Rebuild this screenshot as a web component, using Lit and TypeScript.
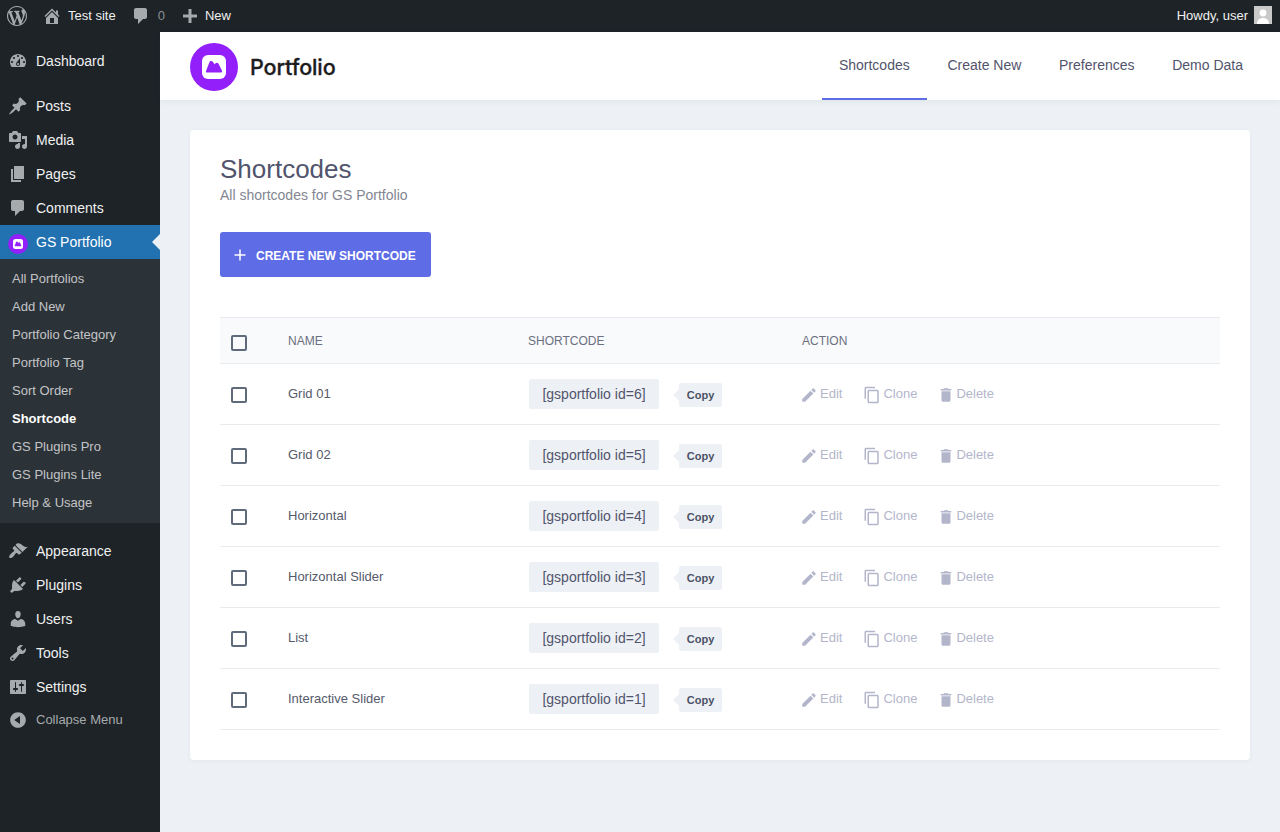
import { LitElement, html, css, svg } from 'lit';
import { customElement } from 'lit/decorators.js';

const ICONS: Record<string, string> = {
    wp: 'M20 10c0-5.51-4.49-10-10-10C4.48 0 0 4.49 0 10c0 5.52 4.48 10 10 10 5.51 0 10-4.48 10-10zM7.78 15.37L4.37 6.22c.55-.02 1.17-.08 1.17-.08.5-.06.44-1.13-.06-1.11 0 0-1.45.11-2.37.11-.18 0-.37 0-.58-.01C4.12 2.69 6.87 1.11 10 1.11c2.33 0 4.45.87 6.05 2.34-.68-.11-1.65.39-1.65 1.58 0 .74.45 1.36.9 2.1.35.61.55 1.36.55 2.46 0 1.49-1.4 5-1.4 5l-3.03-8.37c.54-.02.82-.17.82-.17.5-.05.44-1.25-.06-1.22 0 0-1.44.12-2.38.12-.87 0-2.33-.12-2.33-.12-.5-.03-.56 1.2-.06 1.22l.92.08 1.26 3.41zM17.41 10c.24-.64.74-1.87.43-4.25.7 1.29 1.05 2.71 1.05 4.25 0 3.29-1.73 6.24-4.4 7.78.97-2.59 1.94-5.2 2.92-7.78zM6.1 18.09C3.12 16.65 1.11 13.53 1.11 10c0-1.3.23-2.48.72-3.59C3.25 10.3 4.67 14.2 6.1 18.09zm4.03-6.63l2.58 6.98c-.86.29-1.76.45-2.71.45-.79 0-1.57-.11-2.29-.33.81-2.38 1.62-4.74 2.42-7.1z',
    home: 'M16 8.5l1.53 1.53-1.06 1.06L10 4.62l-6.47 6.47-1.06-1.06L10 2.5l4 4v-2h2v4zm-6-2.46l6 5.99V18H4v-5.97zM12 17v-5H8v5h4z',
    comment: 'M5 2h9c1.1 0 2 .9 2 2v7c0 1.1-.9 2-2 2h-2l-5 5v-5H5c-1.1 0-2-.9-2-2V4c0-1.1.9-2 2-2z',
    plus: 'M17 8.5v3h-5.5V17h-3v-5.5H3v-3h5.5V3h3v5.5z',
    dashboard: 'M3.76 16h12.48c1.1-1.37 1.76-3.11 1.76-5 0-4.42-3.58-8-8-8s-8 3.58-8 8c0 1.89.66 3.63 1.76 5zM10 4c.55 0 1 .45 1 1s-.45 1-1 1-1-.45-1-1 .45-1 1-1zM6 6c.55 0 1 .45 1 1s-.45 1-1 1-1-.45-1-1 .45-1 1-1zm8 0c.55 0 1 .45 1 1s-.45 1-1 1-1-.45-1-1 .45-1 1-1zm-5.37 5.55L12 7v6c0 1.1-.9 2-2 2s-2-.9-2-2c0-.57.24-1.08.63-1.45zM4 10c.55 0 1 .45 1 1s-.45 1-1 1-1-.45-1-1 .45-1 1-1zm12 0c.55 0 1 .45 1 1s-.45 1-1 1-1-.45-1-1 .45-1 1-1zm-5 3c0-.55-.45-1-1-1s-1 .45-1 1 .45 1 1 1 1-.45 1-1z',
    pin: 'M10.44 3.02l1.82-1.82 6.36 6.35-1.83 1.82c-1.05-.68-2.48-.57-3.41.36l-.75.75c-.92.93-1.04 2.35-.35 3.41l-1.83 1.82-2.41-2.41-2.8 2.79c-.42.42-3.38 2.71-3.8 2.29s1.86-3.39 2.28-3.81l2.79-2.79L4.1 9.36l1.83-1.82c1.05.69 2.48.57 3.4-.36l.75-.75c.93-.92 1.05-2.35.36-3.41z',
    media: 'M13 11V4c0-.55-.45-1-1-1h-1.67L9 1H5L3.67 3H2c-.55 0-1 .45-1 1v7c0 .55.45 1 1 1h10c.55 0 1-.45 1-1zM7 4.5c1.38 0 2.5 1.12 2.5 2.5S8.38 9.5 7 9.5 4.5 8.38 4.5 7 5.62 4.5 7 4.5zM14 6h5v10.5c0 1.38-1.12 2.5-2.5 2.5S14 17.88 14 16.5s1.12-2.5 2.5-2.5c.17 0 .34.02.5.05V9h-3V6zm-4 8.05V13h2v3.5c0 1.38-1.12 2.5-2.5 2.5S7 17.88 7 16.5 8.12 14 9.5 14c.17 0 .34.02.5.05z',
    page: 'M6 15V2h10v13H6zm-1 1h8v2H3V5h2v11z',
    appearance: 'M14.48 11.06L7.41 3.99l1.5-1.5c.5-.56 2.3-.47 3.51.32 1.21.8 1.43 1.28 2.91 2.1 1.18.64 2.45 1.26 4.45.85zm-.71.71L6.7 4.7 4.93 6.47c-.39.39-.39 1.02 0 1.41l1.06 1.06c.39.39.39 1.03 0 1.42-.6.6-1.43 1.11-2.21 1.69-.35.26-.7.53-1.01.84-1.34 1.34-2.07 3-1.27 3.8.8.8 2.46.07 3.8-1.27.31-.31.58-.66.84-1.01.58-.78 1.09-1.61 1.69-2.21.39-.39 1.02-.39 1.41 0l1.06 1.06c.39.39 1.02.39 1.41 0z',
    plugins: 'M13.11 4.36L9.87 7.6 8 5.73l3.24-3.24c.35-.34 1.05-.2 1.56.32.52.51.66 1.21.31 1.55zm-8 1.77l.91-1.12 9.01 9.01-1.19.84c-.71.71-2.63 1.16-3.82 1.16H6.14L4.9 17.26c-.59.59-1.54.59-2.12 0-.59-.58-.59-1.53 0-2.12l1.24-1.24v-3.88c0-1.13.4-3.19 1.09-3.89zm7.26 3.97l3.24-3.24c.34-.35 1.04-.21 1.55.31.52.51.66 1.21.31 1.55l-3.24 3.25z',
    users: 'M10 9.25c-2.27 0-2.73-3.44-2.73-3.44C7 4.02 7.82 2 9.97 2c2.16 0 2.98 2.02 2.71 3.81 0 0-.41 3.44-2.68 3.44zm0 2.57L12.72 10c2.39 0 4.52 2.33 4.52 4.53v2.49s-3.65 1.13-7.24 1.13c-3.65 0-7.24-1.13-7.24-1.13v-2.49c0-2.25 1.94-4.48 4.47-4.48z',
    tools: 'M16.68 9.77c-1.34 1.34-3.3 1.67-4.95.99l-5.41 6.52c-.99.99-2.59.99-3.58 0s-.99-2.59 0-3.57l6.52-5.42c-.68-1.65-.35-3.61.99-4.95 1.28-1.28 3.12-1.62 4.72-1.06l-2.89 2.89 2.82 2.82 2.86-2.87c.53 1.58.18 3.39-1.08 4.65zM3.81 16.21c.4.39 1.04.39 1.43 0 .4-.4.4-1.04 0-1.43-.39-.4-1.03-.4-1.43 0-.39.39-.39 1.03 0 1.43z',
    settings: 'M18 16V4c0-.55-.45-1-1-1H3c-.55 0-1 .45-1 1v12c0 .55.45 1 1 1h14c.55 0 1-.45 1-1zM8 11h1c.55 0 1 .45 1 1s-.45 1-1 1H8v1.5c0 .28-.22.5-.5.5s-.5-.22-.5-.5V13H6c-.55 0-1-.45-1-1s.45-1 1-1h1V5.5c0-.28.22-.5.5-.5s.5.22.5.5V11zm5-2h-1c-.55 0-1-.45-1-1s.45-1 1-1h1V5.5c0-.28.22-.5.5-.5s.5.22.5.5V7h1c.55 0 1 .45 1 1s-.45 1-1 1h-1v5.5c0 .28-.22.5-.5.5s-.5-.22-.5-.5V9z',
    collapse: 'M10 2.16c4.33 0 7.84 3.51 7.84 7.84s-3.51 7.84-7.84 7.84S2.16 14.33 2.16 10 5.71 2.16 10 2.16zm2 11.72V6.12L6.18 9.97z',
};

const EDIT = 'M3 17.25V21h3.75L17.81 9.94l-3.75-3.75L3 17.25zM20.71 7.04c.39-.39.39-1.02 0-1.41l-2.34-2.34c-.39-.39-1.02-.39-1.41 0l-1.83 1.83 3.75 3.75 1.83-1.83z';
const COPY = 'M16 1H4c-1.1 0-2 .9-2 2v14h2V3h12V1zm3 4H8c-1.1 0-2 .9-2 2v14c0 1.1.9 2 2 2h11c1.1 0 2-.9 2-2V7c0-1.1-.9-2-2-2zm0 16H8V7h11v14z';
const TRASH = 'M6 19c0 1.1.9 2 2 2h8c1.1 0 2-.9 2-2V7H6v12zM19 4h-3.5l-1-1h-5l-1 1H5v2h14V4z';

const icon = (name: string) => html`<svg class="dash" viewBox="0 0 20 20"><path d=${ICONS[name]}></path></svg>`;
const matIcon = (d: string) => html`<svg class="mat" viewBox="0 0 24 24"><path d=${d}></path></svg>`;

// rounded white tile with the little mountain, same mark at both sizes
const mark = () => svg`
    <circle cx="24" cy="24" r="24" fill="#9320fb"></circle>
    <rect x="12" y="12" width="24" height="24" rx="6" fill="#fff"></rect>
    <path d="M17 29.5c-.9 0-1.3-.8-1-1.6l3.4-8.7c.6-1.4 2.4-1.7 3.3-.5l1.9 2.6 1-1c.9-.9 2.2-.7 2.8.3l3.5 6.8c.5 1-.1 2.1-1.1 2.1z" fill="#9320fb"></path>
`;

const topMenu = [
    { icon: 'dashboard', label: 'Dashboard' },
    { sep: true },
    { icon: 'pin', label: 'Posts' },
    { icon: 'media', label: 'Media' },
    { icon: 'page', label: 'Pages' },
    { icon: 'comment', label: 'Comments' },
];

const subMenu = ['All Portfolios', 'Add New', 'Portfolio Category', 'Portfolio Tag', 'Sort Order', 'Shortcode', 'GS Plugins Pro', 'GS Plugins Lite', 'Help & Usage'];

const bottomMenu = [
    { icon: 'appearance', label: 'Appearance' },
    { icon: 'plugins', label: 'Plugins' },
    { icon: 'users', label: 'Users' },
    { icon: 'tools', label: 'Tools' },
    { icon: 'settings', label: 'Settings' },
];

const shortcodes = [
    { name: 'Grid 01', id: 6 },
    { name: 'Grid 02', id: 5 },
    { name: 'Horizontal', id: 4 },
    { name: 'Horizontal Slider', id: 3 },
    { name: 'List', id: 2 },
    { name: 'Interactive Slider', id: 1 },
];

@customElement('app-root')
export class AppRoot extends LitElement {
    static styles = css`
        :host {
          display: block;
          font-family: "Liberation Sans", Arial, sans-serif;
          background: #edf1f5;
          min-height: 832px;
          color: #50575e;
        }

        a {
          color: inherit;
          text-decoration: none;
        }

        .dash {
          width: 20px;
          height: 20px;
          fill: currentColor;
          flex: none;
        }

        .mat {
          width: 18px;
          height: 18px;
          fill: currentColor;
          flex: none;
        }

        .adminbar {
          height: 32px;
          background: #1d2327;
          color: #f0f0f1;
          font-size: 13px;
          display: flex;
          align-items: center;
          padding: 0 8px 0 7px;
        }

        .adminbar .item {
          display: flex;
          align-items: center;
          height: 32px;
        }

        .adminbar .item span {
          position: relative;
          top: -1px;
        }

        .adminbar .dash {
          color: #a7aaad;
        }

        .adminbar .site {
          margin-left: 15px;
          gap: 6px;
        }

        .adminbar .comments {
          margin-left: 15px;
          gap: 7px;
          color: #8c8f94;
        }

        .adminbar .new {
          margin-left: 15px;
          gap: 5px;
        }

        .howdy {
          margin-left: auto;
          gap: 6px;
        }

        .avatar {
          width: 18px;
          height: 18px;
          background: #c9c9c9;
          fill: #fff;
          display: block;
          margin-bottom: 2px;
        }

        .shell {
          display: flex;
          min-height: 800px;
        }

        .sidebar {
          width: 160px;
          flex: none;
          background: #1d2327;
          padding-top: 12px;
          font-size: 14px;
          color: #f0f0f1;
        }

        .menu-item {
          height: 34px;
          display: flex;
          align-items: center;
          gap: 8px;
          padding-left: 8px;
        }

        .menu-item .dash {
          color: #a7aaad;
        }

        .menu-sep {
          height: 11px;
        }

        .menu-item.current {
          position: relative;
          background: #2271b1;
          color: #fff;
        }

        .menu-item.current::after {
          content: "";
          position: absolute;
          right: 0;
          top: 9px;
          border: 8px solid transparent;
          border-left: 0;
          border-right-color: #edf1f5;
        }

        .menu-logo {
          width: 20px;
          height: 20px;
          display: block;
          flex: none;
          margin-top: 4px;
        }

        .submenu {
          background: #2c3338;
          padding: 5px 0 7px;
          margin-bottom: 11px;
          font-size: 13px;
          color: #c3c4c7;
        }

        .submenu a {
          display: flex;
          align-items: center;
          height: 28px;
          padding-left: 12px;
        }

        .submenu a.active {
          color: #fff;
          font-weight: 700;
        }

        .collapse {
          font-size: 13px;
          color: #a7aaad;
          height: 32px;
        }

        .collapse span {
          position: relative;
          top: -1px;
        }

        .main {
          flex: 1;
          min-width: 0;
        }

        .header {
          height: 68px;
          background: #fff;
          box-shadow: 0 1px 6px rgba(40, 60, 90, 0.08);
          display: flex;
          align-items: stretch;
          justify-content: space-between;
          padding: 0 20px 0 30px;
        }

        .brand {
          display: flex;
          align-items: center;
          gap: 12px;
          padding-top: 2px;
        }

        .brand svg {
          width: 48px;
          height: 48px;
          display: block;
        }

        .brand span {
          font-family: Inter, "Noto Sans", sans-serif;
          font-size: 21.5px;
          font-weight: 500;
          letter-spacing: -0.1px;
          color: #1c1c1e;
          -webkit-text-stroke: 0.3px #1c1c1e;
        }

        .tabs {
          display: flex;
          gap: 3.7px;
          font-size: 14px;
          color: #51546c;
        }

        .tabs a {
          display: flex;
          align-items: center;
          padding: 0 17px;
          border-bottom: 2px solid transparent;
          box-sizing: border-box;
        }

        .tabs a.active {
          border-bottom-color: #5e6ce6;
        }

        .card {
          background: #fff;
          margin: 30px 30px 0;
          padding: 24px 30px 30px;
          border-radius: 4px;
          box-shadow: 0 1px 4px rgba(40, 60, 90, 0.05);
        }

        h1 {
          font-size: 26px;
          font-weight: 400;
          line-height: 30px;
          margin: 0;
          color: #51546c;
        }

        .subtitle {
          font-size: 14px;
          line-height: 18px;
          margin-top: 2px;
          color: #838692;
        }

        .create {
          display: inline-flex;
          align-items: center;
          gap: 9px;
          height: 45px;
          margin: 28px 0 40px;
          padding: 0 15px 0 13px;
          background: #5e6ce6;
          color: #fff;
          border-radius: 3px;
          font-size: 12px;
          font-weight: 700;
          box-sizing: border-box;
        }

        .create svg {
          width: 14px;
          height: 14px;
          stroke: #fff;
          stroke-width: 1.5;
          fill: none;
        }

        .create span {
          position: relative;
          top: 1px;
        }

        .row {
          display: grid;
          grid-template-columns: 68px 240px 272px 1fr;
          align-items: center;
          height: 60px;
          border-bottom: 1px solid #e9ebee;
          font-size: 13px;
          color: #555a6b;
        }

        .row.head {
          height: 45px;
          background: #f9fafb;
          border-top: 1px solid #e9ebee;
          font-size: 12px;
          color: #6b7080;
        }

        .head .action {
          padding-left: 2px;
        }

        .box {
          width: 16px;
          height: 16px;
          margin-left: 11px;
          box-sizing: border-box;
          border: 2px solid #5f6b7b;
          border-radius: 2px;
          position: relative;
          top: 1px;
        }

        .head .box {
          top: 2px;
        }

        .name {
          position: relative;
          top: -1px;
        }

        .code {
          display: flex;
          align-items: center;
          padding-left: 1px;
        }

        .chip {
          height: 30px;
          width: 130px;
          display: flex;
          align-items: center;
          justify-content: center;
          background: #edf1f5;
          border-radius: 2px;
          font-size: 14px;
          color: #51546c;
        }

        .copy {
          position: relative;
          top: 1px;
          margin-left: 20px;
          width: 43px;
          height: 24px;
          display: flex;
          align-items: center;
          justify-content: center;
          background: #edf1f5;
          border-radius: 2px;
          font-size: 11px;
          font-weight: 700;
          color: #4c5266;
        }

        .copy::before {
          content: "";
          position: absolute;
          left: -6px;
          top: 6px;
          border: 6px solid transparent;
          border-left: 0;
          border-right-color: #edf1f5;
        }

        .actions {
          display: flex;
          align-items: center;
          color: #b3b6cb;
        }

        .actions a {
          display: flex;
          align-items: center;
          gap: 2px;
          margin-right: 21px;
        }

        .actions a.clone {
          margin-right: 20px;
        }

        .actions a span {
          position: relative;
          top: -1px;
        }

        .actions .mat {
          position: relative;
          top: 1px;
        }

        .actions a.delete {
          gap: 1px;
        }
    `;

    private renderMenuItem(item: { icon?: string; label?: string; sep?: boolean }) {
        if (item.sep) return html`<div class="menu-sep"></div>`;
        return html`<a class="menu-item">${icon(item.icon!)}<span>${item.label}</span></a>`;
    }

    private renderRow(row: { name: string; id: number }) {
        return html`
            <div class="row">
                <div class="box"></div>
                <div class="name">${row.name}</div>
                <div class="code">
                    <div class="chip">[gsportfolio id=${row.id}]</div>
                    <div class="copy">Copy</div>
                </div>
                <div class="actions">
                    <a>${matIcon(EDIT)}<span>Edit</span></a>
                    <a class="clone">${matIcon(COPY)}<span>Clone</span></a>
                    <a class="delete">${matIcon(TRASH)}<span>Delete</span></a>
                </div>
            </div>
        `;
    }

    protected render() {
        return html`
            <div class="adminbar">
                <div class="item">${icon('wp')}</div>
                <div class="item site">${icon('home')}<span>Test site</span></div>
                <div class="item comments">${icon('comment')}<span>0</span></div>
                <div class="item new">${icon('plus')}<span>New</span></div>
                <div class="item howdy">
                    <span>Howdy, user</span>
                    <svg class="avatar" viewBox="0 0 18 18">
                        <circle cx="9" cy="7" r="3.4"></circle>
                        <path d="M3 18c0-4 2.5-6 6-6s6 2 6 6z"></path>
                    </svg>
                </div>
            </div>
            <div class="shell">
                <nav class="sidebar">
                    ${topMenu.map((item) => this.renderMenuItem(item))}
                    <a class="menu-item current">
                        <svg class="menu-logo" viewBox="0 0 48 48">${mark()}</svg>
                        <span>GS Portfolio</span>
                    </a>
                    <div class="submenu">
                        ${subMenu.map((label) => html`<a class=${label === 'Shortcode' ? 'active' : ''}>${label}</a>`)}
                    </div>
                    ${bottomMenu.map((item) => this.renderMenuItem(item))}
                    <a class="menu-item collapse">${icon('collapse')}<span>Collapse Menu</span></a>
                </nav>
                <main class="main">
                    <header class="header">
                        <div class="brand">
                            <svg viewBox="0 0 48 48">${mark()}</svg>
                            <span>Portfolio</span>
                        </div>
                        <div class="tabs">
                            <a class="active">Shortcodes</a>
                            <a>Create New</a>
                            <a>Preferences</a>
                            <a>Demo Data</a>
                        </div>
                    </header>
                    <section class="card">
                        <h1>Shortcodes</h1>
                        <div class="subtitle">All shortcodes for GS Portfolio</div>
                        <a class="create">
                            <svg viewBox="0 0 14 14"><path d="M7 1.5v11M1.5 7h11"></path></svg>
                            <span>CREATE NEW SHORTCODE</span>
                        </a>
                        <div class="row head">
                            <div class="box"></div>
                            <div>NAME</div>
                            <div>SHORTCODE</div>
                            <div class="action">ACTION</div>
                        </div>
                        ${shortcodes.map((row) => this.renderRow(row))}
                    </section>
                </main>
            </div>
        `;
    }
}
